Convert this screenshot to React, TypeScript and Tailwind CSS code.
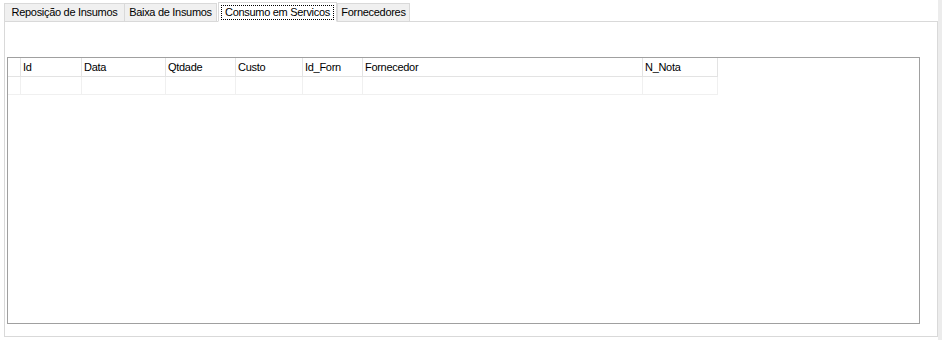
import React from 'react';

const tabs = [
    { name: 'Reposição de Insumos', w: 121 },
    { name: 'Baixa de Insumos', w: 93 },
    { name: 'Consumo em Servicos', w: 119 },
    { name: 'Fornecedores', w: 73 },
];

const cols = [
    { name: 'Id', w: 61 },
    { name: 'Data', w: 84 },
    { name: 'Qtdade', w: 70 },
    { name: 'Custo', w: 67 },
    { name: 'Id_Forn', w: 60 },
    { name: 'Fornecedor', w: 280 },
    { name: 'N_Nota', w: 75 },
];

export default function App() {
    return (
        <div className="w-[942px] h-[340px] bg-white text-[11px] text-black font-['Liberation_Sans',Arial,sans-serif] tracking-[-0.3px] flex">
            <div className="flex-1 flex flex-col pl-[4px] pt-[2px] pb-[3px]">
                {/* tab strip */}
                <div className="flex items-end h-[19px] relative z-10">
                    {tabs.map((t, i) => {
                        const sel = i === 2;
                        return sel ? (
                            <div key={t.name} style={{ width: t.w }} className="h-[20px] -mb-[1px] bg-white border border-[#d9d9d9] border-b-white px-[2px] pt-[2px] mx-[1px] shrink-0">
                                <div className="border border-dotted border-black leading-[13px] h-[15px] text-center whitespace-nowrap">{t.name}</div>
                            </div>
                        ) : (
                            <div key={t.name} style={{ width: t.w }} className="h-[18px] bg-[#f0f0f0] border border-[#d9d9d9] border-b-0 leading-[17px] text-center whitespace-nowrap -ml-[1px] first:ml-0 shrink-0">
                                {t.name}
                            </div>
                        );
                    })}
                </div>
                {/* tab page */}
                <div className="flex-1 border border-[#d9d9d9] bg-white px-[2px] pt-[35px] pb-[12px] flex">
                    <div className="flex-1 border border-[#a0a0a0] mr-[15px] bg-white">
                        <div className="flex w-fit h-[19px] border-b border-[#e3e3e3]">
                            <div className="w-[13px] border-r border-[#e3e3e3]" />
                            {cols.map(c => (
                                <div key={c.name} style={{ width: c.w }} className="border-r border-[#e3e3e3] px-[2px] leading-[18px]">
                                    {c.name}
                                </div>
                            ))}
                        </div>
                        <div className="flex w-fit h-[18px] border-b border-[#f0f0f0]">
                            <div className="w-[13px] border-r border-[#f0f0f0]" />
                            {cols.map(c => (
                                <div key={c.name} style={{ width: c.w }} className="border-r border-[#f0f0f0]" />
                            ))}
                        </div>
                    </div>
                </div>
            </div>
            <div className="w-[4px] bg-[#ececec]" />
        </div>
    );
}
